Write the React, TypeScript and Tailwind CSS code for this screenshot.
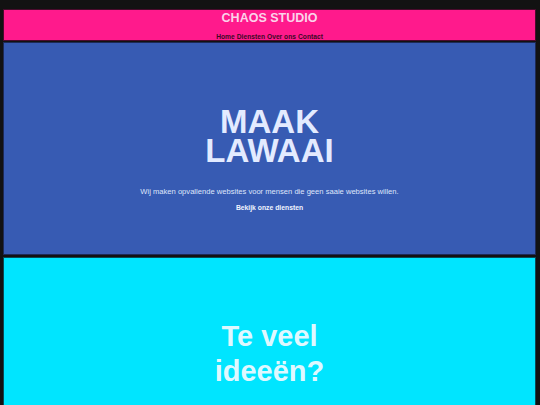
export default function App() {
  return (
    <div className="min-h-screen bg-[#121212] pl-[3px] pr-[4px] pt-[9px] font-['Liberation_Sans',Arial,sans-serif]">
      {/* Header */}
      <header className="flex h-[32px] flex-col items-center border border-[#4a0a2c] bg-[#ff1a8c]">
        <h1 className="mt-[1px] text-[12.5px] font-bold leading-[14px] text-[#fbd3ea]">CHAOS STUDIO</h1>
        <nav className="mt-[8px] flex gap-[2px] text-[6.7px] font-bold leading-[8px] text-[#3d0824]">
          <a>Home</a>
          <a>Diensten</a>
          <a>Over ons</a>
          <a>Contact</a>
        </nav>
      </header>

      {/* Hero */}
      <section className="mt-[1px] flex h-[213px] flex-col items-center border border-[#1e2a55] bg-[#375bb3] pt-[64px] text-center">
        <h2 className="text-[33px] font-bold leading-[29px] text-[#e3ebff]">
          MAAK
          <br />
          LAWAAI
        </h2>
        <p className="mt-[22px] text-[7.6px] leading-[10px] text-[#dfe6fb]">
          Wij maken opvallende websites voor mensen die geen saaie websites willen.
        </p>
        <a className="mt-[7px] text-[6.8px] font-bold leading-[8px] text-[#f0f4ff]">Bekijk onze diensten</a>
      </section>

      {/* Ideas */}
      <section className="mt-[2px] flex h-[213px] flex-col items-center border border-[#0b4a55] bg-[#00e5ff] pt-[61px] text-center">
        <h2 className="text-[29px] font-bold leading-[35px] text-[#dff8ff]">
          Te veel
          <br />
          ideeën?
        </h2>
      </section>
    </div>
  );
}
